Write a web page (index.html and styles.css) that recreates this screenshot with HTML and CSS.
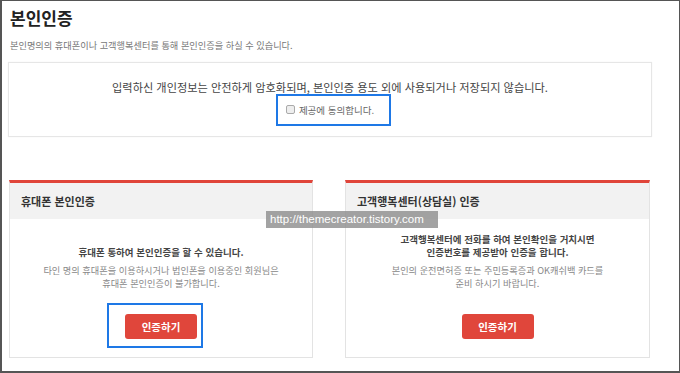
FILE: index.html
```html
<!DOCTYPE html>
<html lang="ko">
<head>
    <meta charset="UTF-8">
    <title>본인인증</title>
    <link rel="stylesheet" href="styles.css">
</head>
<body>

    <div class="page">
        <h2 class="title">본인인증</h2>
        <p class="desc">본인명의의 휴대폰이나 고객행복센터를 통해 본인인증을 하실 수 있습니다.</p>

        <div class="notice">
            <p class="notice-text">입력하신 개인정보는 안전하게 암호화되며, 본인인증 용도 외에 사용되거나 저장되지 않습니다.</p>
            <label class="agree">
                <input type="checkbox" class="agree-check">
                <span>제공에 동의합니다.</span>
                <span class="mark mark-agree"></span>
            </label>
        </div>

        <div class="cards">
            <div class="card">
                <div class="card-head">휴대폰 본인인증</div>
                <div class="card-body">
                    <div class="card-text">
                        <p class="strong">휴대폰 통하여 본인인증을 할 수 있습니다.</p>
                        <p class="muted">타인 명의 휴대폰을 이용하시거나 법인폰을 이용중인 회원님은<br>휴대폰 본인인증이 불가합니다.</p>
                    </div>
                    <span class="btn-wrap">
                        <button type="button" class="btn">인증하기</button>
                        <span class="mark mark-btn"></span>
                    </span>
                </div>
            </div>

            <div class="card">
                <div class="card-head">고객행복센터(상담실) 인증</div>
                <div class="card-body">
                    <div class="card-text">
                        <p class="strong">고객행복센터에 전화를 하여 본인확인을 거치시면<br>인증번호를 제공받아 인증을 합니다.</p>
                        <p class="muted">본인의 운전면허증 또는 주민등록증과 OK캐쉬백 카드를<br>준비 하시기 바랍니다.</p>
                    </div>
                    <span class="btn-wrap">
                        <button type="button" class="btn">인증하기</button>
                    </span>
                </div>
            </div>
        </div>

        <div class="watermark">http://themecreator.tistory.com</div>
    </div>

</body>
</html>
```

FILE: styles.css
```css
body {
    margin: 0;
    font-family: "Noto Sans CJK KR", "Noto Sans", sans-serif;
    background-color: #fff;
}

p {
    margin: 0;
}

.page {
    position: relative;
    width: 680px;
    height: 373px;
    box-sizing: border-box;
    border: 1px solid #555;
    border-left-width: 2px;
    border-bottom-width: 2px;
    padding-left: 6px;
    overflow: hidden;
}

.title {
    margin: 6px 0 0 2px;
    font-size: 17px;
    line-height: 22px;
    font-weight: bold;
    color: #222;
}

.desc {
    margin: 9px 0 0 2px;
    font-size: 9.2px;
    line-height: 14px;
    color: #777;
}

/* notice box */
.notice {
    width: 644px;
    box-sizing: border-box;
    margin-top: 10px;
    padding: 16px 0 17px;
    border: 1px solid #e6e6e6;
    box-shadow: 0 0 1px #eee;
    text-align: center;
}

.notice-text {
    font-size: 11.2px;
    line-height: 16px;
    color: #444;
}

.agree {
    position: relative;
    display: inline-flex;
    align-items: center;
    gap: 4px;
    margin-top: 7px;
    font-size: 9.5px;
    line-height: 14px;
    color: #666;
}

.agree-check {
    appearance: none;
    width: 9px;
    height: 9px;
    margin: 0;
    border: 1px solid #aaa;
    border-radius: 2px;
    background-color: #eee;
}

/* blue highlight frames */
.mark {
    position: absolute;
    border: 2px solid #1e78e6;
}

.mark-agree {
    top: -9px;
    bottom: -9px;
    left: -10px;
    right: -17px;
}

.mark-btn {
    top: -11px;
    bottom: -9px;
    left: -18px;
    right: -6px;
}

/* cards */
.cards {
    display: flex;
    gap: 32px;
    margin: 43px 0 0 1px;
}

.card {
    width: 304px;
    box-sizing: border-box;
    border: 1px solid #e3e3e3;
    border-top: 3px solid #e0453a;
}

.card + .card {
    width: 305px;
}

.card-head {
    height: 36px;
    line-height: 36px;
    padding-left: 11px;
    background-color: #f2f2f2;
    font-size: 11px;
    font-weight: bold;
    color: #333;
}

.card-body {
    padding: 14px 0 18px;
    text-align: center;
}

.card-text {
    height: 57px;
    display: flex;
    flex-direction: column;
    justify-content: flex-end;
}

.strong {
    font-size: 9.5px;
    line-height: 13px;
    font-weight: bold;
    color: #444;
}

.muted {
    margin-top: 5px;
    font-size: 9.2px;
    line-height: 13px;
    color: #888;
}

.btn-wrap {
    position: relative;
    display: inline-block;
    margin-top: 24px;
    vertical-align: top;
}

.btn {
    display: block;
    width: 72px;
    height: 25px;
    padding: 0;
    border: none;
    border-radius: 3px;
    background-color: #e0463b;
    color: #fff;
    font-family: inherit;
    font-size: 10.5px;
    font-weight: bold;
    cursor: pointer;
}

.watermark {
    position: absolute;
    left: 264px;
    top: 210px;
    width: 172px;
    height: 17px;
    line-height: 17px;
    padding-left: 4px;
    box-sizing: border-box;
    background-color: rgba(140, 140, 140, 0.8);
    color: #fff;
    font-family: "Liberation Sans", sans-serif;
    font-size: 11.5px;
    white-space: nowrap;
}
```
